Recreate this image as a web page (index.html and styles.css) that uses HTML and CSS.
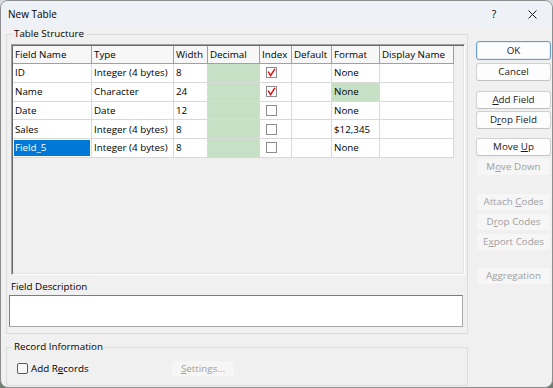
FILE: index.html
```html
<!DOCTYPE html>
<html>
<head>
<meta charset="utf-8">
<title>New Table</title>
<link rel="stylesheet" href="styles.css">
</head>
<body>
<div class="window">
  <div class="titlebar">
    <span class="title">New Table</span>
    <span class="help">?</span>
    <svg class="close" width="9" height="9" viewBox="0 0 9 9"><path d="M0.5 0.5 L8.5 8.5 M8.5 0.5 L0.5 8.5" stroke="#1a1a1a" stroke-width="1" fill="none"/></svg>
  </div>
  <div class="body">
    <div class="left">
      <fieldset class="group ts">
        <legend>Table Structure</legend>
        <div class="gridbox">
          <div class="grid">
            <div class="hd">Field Name</div><div class="hd">Type</div><div class="hd">Width</div><div class="hd">Decimal</div><div class="hd">Index</div><div class="hd">Default</div><div class="hd">Format</div><div class="hd">Display Name</div>

            <div class="c">ID</div><div class="c">Integer (4 bytes)</div><div class="c">8</div><div class="c g"></div><div class="c ix"><svg width="11" height="11" viewBox="0 0 11 11"><rect x="0.5" y="0.5" width="10" height="10" fill="#fff" stroke="#8c8c8c"/><path d="M2.2 4.6 L4.6 8.6 L8.9 1.8" stroke="#e01010" stroke-width="1.5" fill="none"/></svg></div><div class="c"></div><div class="c">None</div><div class="c"></div>

            <div class="c">Name</div><div class="c">Character</div><div class="c">24</div><div class="c g"></div><div class="c ix"><svg width="11" height="11" viewBox="0 0 11 11"><rect x="0.5" y="0.5" width="10" height="10" fill="#fff" stroke="#8c8c8c"/><path d="M2.2 4.6 L4.6 8.6 L8.9 1.8" stroke="#e01010" stroke-width="1.5" fill="none"/></svg></div><div class="c"></div><div class="c g">None</div><div class="c"></div>

            <div class="c">Date</div><div class="c">Date</div><div class="c">12</div><div class="c g"></div><div class="c ix"><svg width="11" height="11" viewBox="0 0 11 11"><rect x="0.5" y="0.5" width="10" height="10" fill="#fff" stroke="#8c8c8c"/></svg></div><div class="c"></div><div class="c">None</div><div class="c"></div>

            <div class="c">Sales</div><div class="c">Integer (4 bytes)</div><div class="c">8</div><div class="c g"></div><div class="c ix"><svg width="11" height="11" viewBox="0 0 11 11"><rect x="0.5" y="0.5" width="10" height="10" fill="#fff" stroke="#8c8c8c"/></svg></div><div class="c"></div><div class="c">$12,345</div><div class="c"></div>

            <div class="c sel">Field_5</div><div class="c">Integer (4 bytes)</div><div class="c">8</div><div class="c g"></div><div class="c ix"><svg width="11" height="11" viewBox="0 0 11 11"><rect x="0.5" y="0.5" width="10" height="10" fill="#fff" stroke="#8c8c8c"/></svg></div><div class="c"></div><div class="c">None</div><div class="c"></div>
          </div>
        </div>
        <div class="fd-label">Field Description</div>
        <div class="textbox"></div>
      </fieldset>
      <fieldset class="group ri">
        <legend>Record Information</legend>
        <div class="ri-row">
          <label class="chk"><span class="box"></span><span>Add R<u>e</u>cords</span></label>
          <button class="btn dis settings" disabled><u>S</u>ettings...</button>
        </div>
      </fieldset>
    </div>
    <div class="buttons">
      <button class="btn ok">OK</button>
      <button class="btn m3">Cancel</button>
      <button class="btn m10"><u>A</u>dd Field</button>
      <button class="btn">D<u>r</u>op Field</button>
      <button class="btn m9">Move <u>U</u>p</button>
      <button class="btn dis" disabled>M<u>o</u>ve Down</button>
      <button class="btn dis m17" disabled>Attach <u>C</u>odes</button>
      <button class="btn dis" disabled>D<u>r</u>op Codes</button>
      <button class="btn dis" disabled>E<u>x</u>port Codes</button>
      <button class="btn dis m16" disabled>Aggregation</button>
    </div>
  </div>
</div>
</body>
</html>
```
FILE: styles.css
```css
* { box-sizing: border-box; }
html, body { margin: 0; padding: 0; }
body {
  width: 553px;
  height: 388px;
  background: linear-gradient(#d8dcdf, #6c7c6c);
  font-family: "Open Sans", "Noto Sans", sans-serif;
  font-size: 9.8px;
  color: #000;
}
.window {
  width: 553px;
  height: 388px;
  background: #f0f0f0;
  border: 1px solid #8d8d8d;
  border-radius: 8px;
  overflow: hidden;
  display: flex;
  flex-direction: column;
}
.titlebar {
  height: 26px;
  flex: none;
  background: #eef2f7;
  display: flex;
  align-items: center;
  padding-left: 7px;
}
.title { flex: 1; font-size: 10px; }
.help { width: 10px; text-align: center; margin-right: 29px; font-size: 10.5px; }
.close { margin-right: 15px; }
.body {
  flex: 1;
  display: flex;
  padding-left: 5px;
}
.left { width: 462px; flex: none; }
.group {
  margin: 0;
  padding: 0 0 6px 0;
  border: 1px solid #dcdcdc;
  min-width: 0;
}
.group legend {
  padding: 0 2px;
  margin-left: 5px;
  line-height: 14px;
  font-size: 9.8px;
}
.gridbox {
  margin: 3px 0 0 4px;
  width: 454px;
  height: 231px;
  border: 1px solid;
  border-color: #a0a0a0 #ffffff #ffffff #a0a0a0;
  box-shadow: inset 1px 1px 0 #696969, inset -1px -1px 0 #e3e3e3;
  padding: 1px;
  background: #f0f0f0;
}
.grid {
  display: grid;
  grid-template-columns: 79px 82px 34px 52px 32px 40px 48px 74px;
  grid-template-rows: 18px;
  grid-auto-rows: 18.75px;
  width: 441px;
}
.hd {
  background: #f7f7f7;
  border-right: 1px solid #a0a0a0;
  border-bottom: 1px solid #a0a0a0;
  padding-left: 2px;
  display: flex;
  align-items: center;
  white-space: nowrap;
  overflow: hidden;
}
.c {
  background: #fff;
  border-right: 1px solid #d9d9d9;
  border-bottom: 1px solid #d9d9d9;
  padding-left: 2px;
  display: flex;
  align-items: center;
  white-space: nowrap;
  overflow: hidden;
}
.c.g { background: #c6e0c6; }
.c.ix { padding-left: 6px; }
.c.sel { background: #0078d7; color: #fff; box-shadow: inset 0 0 0 1px #fff; }
.fd-label {
  margin: 5px 0 0 4px;
  line-height: 14px;
}
.textbox {
  margin: 1px 0 0 2px;
  width: 454px;
  height: 32px;
  background: #fff;
  border: 1px solid #a9a9a9;
  border-top-color: #7d7d7d;
  border-left-color: #7d7d7d;
}
.ri { margin-top: 6px; padding-bottom: 8px; }
.ri-row {
  display: flex;
  align-items: center;
  margin-top: 6px;
  padding-left: 10px;
  height: 17px;
}
.chk {
  width: 154px;
  display: flex;
  align-items: center;
}
.chk .box {
  width: 11px;
  height: 11px;
  border: 1px solid #5a5a5a;
  border-radius: 2px;
  background: #f7f7f7;
  margin-right: 3px;
}
.btn {
  font-family: inherit;
  font-size: 9.8px;
  color: #1a1a1a;
  width: 75px;
  height: 18px;
  padding: 0;
  margin: 0;
  background: #fdfdfd;
  border: 1px solid #d0d0d0;
  border-bottom-color: #c2c2c2;
  border-radius: 3px;
  line-height: 14px;
}
.btn.dis {
  background: #f6f6f6;
  border-color: #f0f0f0;
  color: #a0a0a0;
}
.settings { width: 64px; height: 17px; }
.buttons {
  margin-left: 8px;
  padding-top: 14px;
  display: flex;
  flex-direction: column;
  gap: 2px;
}
.btn.ok {
  height: 19px;
  border-color: #6a9bd6;
  box-shadow: inset 0 0 0 1px #e6eef8;
}
.m3 { margin-top: 1px; }
.m10 { margin-top: 8px; }
.m9 { margin-top: 7px; }
.m17 { margin-top: 15px; }
.m16 { margin-top: 14px; }
```
